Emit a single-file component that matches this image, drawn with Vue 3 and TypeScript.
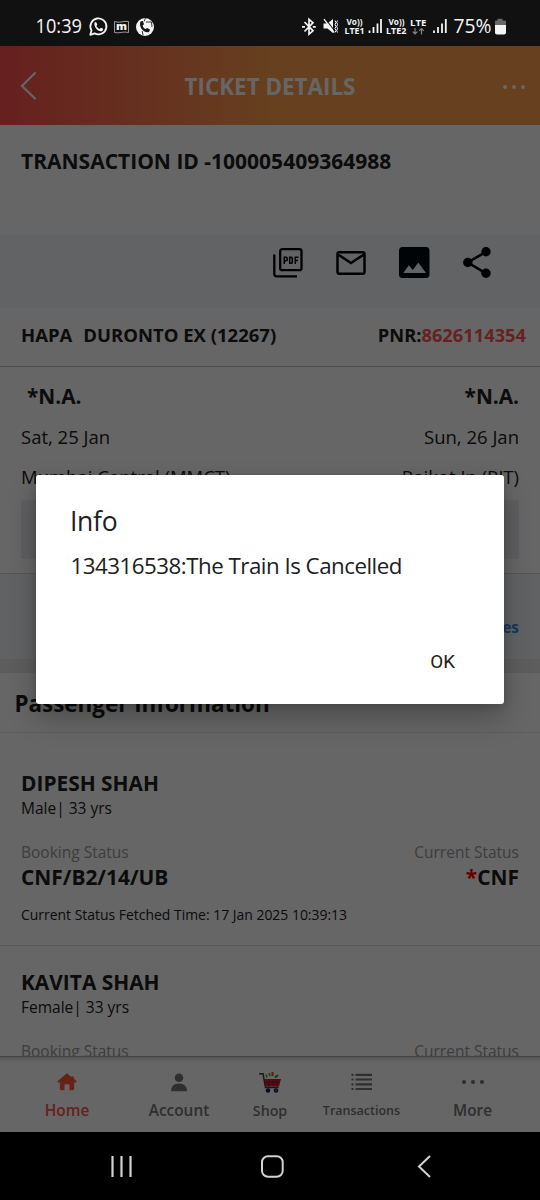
<script setup lang="ts">
interface Passenger {
  name: string
  detail: string
  booking: string
  current: string
  fetched: string
}

const passengers: Passenger[] = [
  {
    name: 'DIPESH SHAH',
    detail: 'Male| 33 yrs',
    booking: 'CNF/B2/14/UB',
    current: 'CNF',
    fetched: 'Current Status Fetched Time: 17 Jan 2025 10:39:13',
  },
  { name: 'KAVITA SHAH', detail: 'Female| 33 yrs', booking: '', current: '', fetched: '' },
]
</script>

<template>
  <div class="phone">
    <svg class="status" viewBox="0 0 540 46" width="540" height="46">
      <text class="clock" x="35.5" y="33" textLength="46.500" lengthAdjust="spacingAndGlyphs">10:39</text>
      <!-- chat -->
      <path d="M90.3 34.8l1.2-4.4a8 8 0 1 1 3.1 3z" fill="none" stroke="#f4f4f4" stroke-width="1.8" stroke-linejoin="round" />
      <path d="M94.6 22.6c.8-.9 1.5-.7 1.8 0l.8 1.8c.1.5-.7 1.1-.8 1.5.7 1.5 1.8 2.4 3.2 3 .5 0 1-1.200 1.500-1.100l1.900 1c.5.5-.1 2-1.300 2.400-3.700.8-8.400-4.300-7.100-8.600z" fill="#f4f4f4" />
      <!-- m badge -->
      <path d="M114.500 21.500q3.500 1.300 7 .4t7-.4v11q-3.500-.9-7-.1t-7 .1z" fill="none" stroke="#a8a8a8" stroke-width=".9" />
      <text class="badge" x="121.500" y="30" text-anchor="middle">m</text>
      <!-- call ball -->
      <circle cx="145" cy="27" r="9" fill="#f4f4f4" />
      <path d="M140.500 21.500c-2 5 2.500 11.500 8.300 10.700l1.300-2.400-3-1.800-1.400 1.100c-1.600-.7-2.700-2.100-3.100-3.700l1.400-1.200-1.200-3.300z" fill="#161616" />
      <path d="M145.500 18l-1.500 3.500M146 22h5.500l.5 5M143 35l-.8-4" fill="none" stroke="#333" stroke-width="1" />
      <!-- bluetooth -->
      <path d="M304.500 22l8.500 8.800-4 3.400V19.300l4 3.400-8.500 8.800" fill="none" stroke="#f4f4f4" stroke-width="1.700" />
      <path d="M302 26.800h3M312.800 26.800h3" stroke="#f4f4f4" stroke-width="1.800" />
      <!-- muted -->
      <path d="M323.500 23.500h4l5.500-4.500v14l-5.500-4.500h-4z" fill="#f4f4f4" />
      <path d="M325 18.500l10.500 13.500" stroke="#111" stroke-width="1.200" />
      <path d="M324 19.200l10 13.300" stroke="#f4f4f4" stroke-width="1.400" />
      <path d="M335 20.500l1 2-1 2 1 2-1 2 1 2-1 2M337.500 20.500l-.8 2 .8 2-.8 2 .8 2-.8 2 .8 2" fill="none" stroke="#f4f4f4" stroke-width="1" />
      <g class="net">
        <text x="346.500" y="25.200" textLength="16" lengthAdjust="spacingAndGlyphs">Vo))</text>
        <text x="344.500" y="34" textLength="20" lengthAdjust="spacingAndGlyphs">LTE1</text>
        <text x="388.500" y="25.200" textLength="16" lengthAdjust="spacingAndGlyphs">Vo))</text>
        <text x="386" y="34" textLength="20.500" lengthAdjust="spacingAndGlyphs">LTE2</text>
        <text x="410" y="25.500" textLength="16.500" lengthAdjust="spacingAndGlyphs">LTE</text>
      </g>
      <path d="M369.500 30.500V33M373.500 27v6M377.500 23.500V33M381 19v14M434 30.500V33M438 27v6M442 23.500V33M445.800 19v14" fill="none" stroke="#f4f4f4" stroke-width="1.800" />
      <path d="M415 28v6m-2.300-2.300L415 34l2.300-2.300M421.500 34.500v-6m-2.300 2.300l2.300-2.300 2.300 2.300" fill="none" stroke="#8a8a8a" stroke-width="1.100" />
      <text class="clock" x="453.500" y="33" textLength="38" lengthAdjust="spacingAndGlyphs">75%</text>
      <path d="M497.500 18.800h5v1.700h2.500q1 0 1 1V26h-11v-4.500q0-1 1-1h1.500z" fill="#666" />
      <path d="M495 25h11v7.500q0 2-2 2h-7q-2 0-2-2z" fill="#f4f4f4" />
    </svg>

    <div class="app">
      <header class="header">
        <svg class="back" width="18" height="30" viewBox="0 0 18 30"><path d="M15 2L2 15l13 12.500" fill="none" stroke="#fff" stroke-width="2.200" stroke-linecap="round" /></svg>
        <h1>TICKET DETAILS</h1>
        <svg class="dots" width="24" height="6" viewBox="0 0 24 6"><circle cx="3" cy="3" r="2" /><circle cx="12" cy="3" r="2" /><circle cx="21" cy="3" r="2" /></svg>
      </header>

      <main class="content">
        <section class="transaction">TRANSACTION ID -100005409364988</section>

        <section class="tools">
          <svg width="30" height="30" viewBox="0 0 30 30">
            <rect x="7.200" y="1.200" width="21.300" height="21" rx="2" fill="none" stroke="#000" stroke-width="2.300" />
            <path d="M1.300 6.500V26q0 2.300 2.300 2.300H24" fill="none" stroke="#000" stroke-width="2.300" />
            <path d="M11.300 16V9.300h1.900q1 0 1 1v1.500q0 1-1 1h-1.900M16.700 9.300v6h1.500q1.100 0 1.100-1.100v-3.800q0-1.100-1.100-1.100zM22.300 16V9.300h3.200M22.300 12.500h2.700" fill="none" stroke="#000" stroke-width="1.500" />
          </svg>
          <svg width="30" height="30" viewBox="0 0 30 30">
            <rect x="1.500" y="4.200" width="27" height="21.600" rx="1.800" fill="none" stroke="#000" stroke-width="2.500" />
            <path d="M2 6.500l13 8.500 13-8.500" fill="none" stroke="#000" stroke-width="2.600" />
          </svg>
          <svg width="31" height="31" viewBox="0 0 31 31">
            <rect width="30.500" height="31" rx="3.500" fill="#000c11" />
            <path d="M4.300 26l5.500-7.700 4 4.700L19.300 15.500l7.700 10.500z" fill="#f6f7fa" />
          </svg>
          <svg width="28" height="31" viewBox="0 0 28 31">
            <path d="M23 4.800L4.800 15.500 23 26.300" fill="none" stroke="#000" stroke-width="2.600" />
            <circle cx="23" cy="4.800" r="4.700" /><circle cx="4.800" cy="15.500" r="4.700" /><circle cx="23" cy="26.300" r="4.700" />
          </svg>
        </section>

        <section class="train">
          <span class="train-name"><span>HAPA</span><span>DURONTO EX (12267)</span></span>
          <span class="pnr">PNR:<b>8626114354</b></span>
        </section>

        <section class="journey">
          <div class="pair time"><span class="from">*N.A.</span><span>*N.A.</span></div>
          <div class="pair date"><span>Sat, 25 Jan</span><span>Sun, 26 Jan</span></div>
          <div class="pair station"><span>Mumbai Central (MMCT)</span><span>Rajkot Jn (RJT)</span></div>
          <div class="boarding"></div>
        </section>

        <section class="links"><a>es</a></section>
        <div class="stripe"></div>
        <h2>Passenger Information</h2>

        <section v-for="p in passengers" :key="p.name" class="passenger">
          <div class="name">{{ p.name }}</div>
          <div class="detail">{{ p.detail }}</div>
          <div class="pair labels"><span>Booking Status</span><span>Current Status</span></div>
          <div class="pair values"><span>{{ p.booking }}</span><span v-if="p.current"><i>*</i>{{ p.current }}</span></div>
          <div class="fetched">{{ p.fetched }}</div>
        </section>
      </main>

      <nav class="tabs">
        <div class="tab active">
          <svg width="20" height="18" viewBox="0 0 20 18"><path d="M10 .3L.5 8.200q-.3 1.300.6 1.300h1.700v6.300q0 1.400 1.400 1.400h3.300v-5q0-1 1-1h3q1 0 1 1v5h3.300q1.400 0 1.400-1.400V9.500h1.700q.9 0 .6-1.300L16.800 5.500V3.400h-2.500v.5z" fill="#f9553e" /></svg>
          <span>Home</span>
        </div>
        <div class="tab">
          <svg width="18" height="19" viewBox="0 0 18 19"><circle cx="9" cy="4.800" r="4.300" fill="#757575" /><path d="M1 18.300q0-7.800 8-7.800t8 7.800z" fill="#757575" /></svg>
          <span>Account</span>
        </div>
        <div class="tab shop">
          <svg width="24" height="24" viewBox="0 0 24 24">
            <path d="M1 3.800h4l2.500 13.700h13" fill="none" stroke="#35434b" stroke-width="1.500" />
            <path d="M6 9h17l-2 7.500H7.500z" fill="#d21f35" />
            <path d="M7 12.200h14.500M11 9.500v7M15 9.500v7M19 9.500v7" stroke="#8e1428" stroke-width=".8" />
            <path d="M9 7.500l-1-3M12 6l-1-3" stroke="#43a047" stroke-width="1.600" /><path d="M14.500 2v4" stroke="#d95336" stroke-width="2.200" /><path d="M17 7.500l3-2.500" stroke="#4d8d3d" stroke-width="2" />
            <circle cx="10" cy="20.500" r="2.300" fill="#16213d" /><circle cx="18" cy="20.500" r="2.300" fill="#16213d" /><circle cx="18" cy="20.500" r=".8" fill="#9aa" />
          </svg>
          <span>Shop</span>
        </div>
        <div class="tab transactions">
          <svg width="22" height="18" viewBox="0 0 22 18"><path d="M4.500 1.800H21M4.500 6.500H21M4.500 11.300H21M4.500 16H21" stroke="#757575" stroke-width="2.200" /><path d="M.5 1.800h2M.5 6.500h2M.5 11.300h2M.5 16h2" stroke="#757575" stroke-width="2.200" /></svg>
          <span>Transactions</span>
        </div>
        <div class="tab more">
          <svg width="24" height="6" viewBox="0 0 24 6" fill="#757575"><circle cx="3" cy="3" r="2.100" /><circle cx="12" cy="3" r="2.100" /><circle cx="21" cy="3" r="2.100" /></svg>
          <span>More</span>
        </div>
      </nav>

      <div class="backdrop">
        <div class="dialog" role="dialog">
          <div class="dialog-title">Info</div>
          <div class="dialog-text">134316538:The Train Is Cancelled</div>
          <button>OK</button>
        </div>
      </div>
    </div>

    <svg class="system" width="540" height="68" viewBox="0 0 540 68" fill="none" stroke="#d2d2d2" stroke-width="2">
      <path d="M112.500 24v21M121.500 24v21M130.500 24v21" stroke-width="2.200" />
      <rect x="262" y="24.300" width="20.700" height="20.500" rx="6" />
      <path d="M430 24l-11 10.500L430 45" />
    </svg>
  </div>
</template>

<style>
body {
  margin: 0;
}
</style>

<style scoped>
.phone {
  width: 540px;
  height: 1200px;
  display: flex;
  flex-direction: column;
  overflow: hidden;
  background: #000;
  font-family: "Open Sans", sans-serif;
  color: #202020;
}
.status {
  display: block;
  flex: none;
  background: #111;
}
.clock {
  font-size: 19.5px;
  fill: #f4f4f4;
}
.badge {
  font-size: 11px;
  font-weight: 800;
  fill: #f4f4f4;
}
.net text {
  font-size: 8.6px;
  font-weight: 700;
  fill: #f4f4f4;
}
.app {
  position: relative;
  height: 1086px;
  flex: none;
  display: flex;
  flex-direction: column;
  background: #fff;
}
.header {
  height: 79px;
  flex: none;
  display: flex;
  align-items: center;
  justify-content: space-between;
  box-sizing: border-box;
  padding: 0 14px 0 20px;
  background: linear-gradient(90deg, #ff504e, #ffa04e 50%);
}
h1 {
  margin: 0;
  font-size: 22.4px;
  line-height: 30px;
  font-weight: 700;
  color: #fff;
  padding: 2px 0 0;
}
.dots {
  fill: #fff;
  margin-top: 3px;
}
.content {
  height: 931px;
  flex: none;
  overflow: hidden;
}
.transaction {
  height: 109px;
  box-sizing: border-box;
  padding: 21px 21px 0;
  font-size: 21px;
  line-height: 30px;
  font-weight: 700;
}
.tools {
  height: 74px;
  box-sizing: border-box;
  display: flex;
  justify-content: flex-end;
  align-items: center;
  gap: 33px;
  padding: 0 49px 17px 0;
  background: #f6f7fa;
}
.train {
  height: 59px;
  box-sizing: border-box;
  display: flex;
  justify-content: space-between;
  align-items: center;
  padding: 0 14px 4px 21px;
  border-bottom: 1px solid #c4c4c4;
  font-size: 18.3px;
  line-height: 26px;
  font-weight: 700;
}
.train-name {
  display: flex;
  gap: 11px;
  font-size: 18.5px;
}
.pnr b {
  font-weight: inherit;
  color: #ff5350;
}
.pair {
  display: flex;
  justify-content: space-between;
}
.journey {
  height: 207px;
  box-sizing: border-box;
  padding: 9px 21px 0;
  border-bottom: 1px solid #d2d8dc;
  font-size: 18.5px;
}
.time {
  font-size: 20.8px;
  line-height: 40px;
  font-weight: 700;
}
.from {
  padding-left: 6px;
}
.date {
  line-height: 42px;
}
.station {
  line-height: 37px;
}
.boarding {
  height: 59px;
  margin-top: 5px;
  background: #edeef2;
}
.links {
  height: 85px;
  box-sizing: border-box;
  padding: 11px 21px 0;
  text-align: right;
  background: #f0f5fa;
  font-size: 15.4px;
  line-height: 86px;
  font-weight: 700;
  color: #2f8fe8;
}
.stripe {
  height: 14px;
  background: #ece9ec;
}
h2 {
  margin: 0;
  height: 59px;
  padding-left: 14.5px;
  border-bottom: 1px solid #eaeaea;
  font-size: 22.4px;
  line-height: 61px;
  font-weight: 700;
}
.passenger {
  padding: 23px 21px 18px;
  border-bottom: 1px solid #dcdcdc;
}
h2 + .passenger {
  padding-top: 37px;
}
.name {
  font-size: 20.9px;
  line-height: 27px;
  font-weight: 700;
}
.detail {
  font-size: 15.5px;
  line-height: 23px;
}
.labels {
  margin-top: 19px;
  font-size: 15.5px;
  line-height: 26px;
  color: #999;
}
.values {
  font-size: 20.9px;
  line-height: 25px;
  font-weight: 700;
}
.fetched {
  margin-top: 12px;
  font-size: 13.95px;
  line-height: 25px;
}
.values i {
  font-style: normal;
  color: #f00;
}
.tabs {
  position: relative;
  height: 76px;
  flex: none;
  display: grid;
  grid-template-columns: 134px 90px 92px 91px 133px;
  background: linear-gradient(#c4c4c4, #f2f2f2 4px, #fff 8px);
  box-shadow: inset 0 1px #aaa;
}
.tab {
  display: grid;
  grid-template-rows: 52px 24px;
  justify-items: center;
  align-items: center;
  font-size: 15.4px;
  line-height: 20px;
  font-weight: 600;
  color: #757575;
}
.tab svg {
  overflow: visible;
}
.tab span {
  transform: translateY(-9px);
}
.active {
  color: #ff5350;
}
.shop {
  font-size: 14.2px;
}
.transactions {
  font-size: 12.5px;
}
.more {
  padding-right: 2px;
}
.backdrop {
  position: absolute;
  inset: 0;
  background: rgba(0, 0, 0, 0.6);
}
.dialog {
  position: absolute;
  left: 36px;
  top: 429px;
  width: 468px;
  height: 229px;
  box-sizing: border-box;
  display: flex;
  flex-direction: column;
  padding: 26px 49px 0 34px;
  border-radius: 3px;
  background: #fff;
  box-shadow: 0 14px 28px rgba(0, 0, 0, 0.25), 0 2px 8px rgba(0, 0, 0, 0.15);
}
.dialog-title {
  font-size: 26.5px;
  line-height: 40px;
  letter-spacing: -0.3px;
}
.dialog-text {
  margin-top: 8px;
  padding-left: 0.5px;
  font-size: 22.3px;
  line-height: 34px;
  letter-spacing: -0.49px;
  white-space: nowrap;
}
button {
  align-self: flex-end;
  margin-top: 64px;
  padding: 0;
  border: 0;
  background: none;
  font: 400 18.8px/30px Roboto, sans-serif;
  color: #202020;
}
.system {
  display: block;
  flex: none;
}
</style>
